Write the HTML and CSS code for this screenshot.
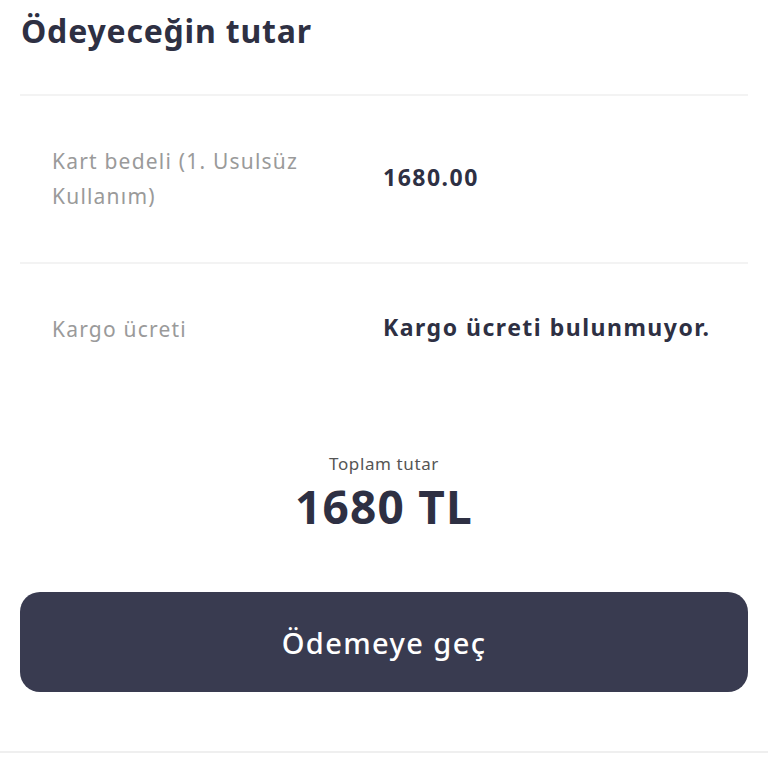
FILE: index.html
```html
<!DOCTYPE html>
<html lang="tr">
<head>
	<meta charset="UTF-8">
	<title>Ödeyeceğin tutar</title>
	<link rel="stylesheet" href="styles.css">
</head>
<body>
	<div class="page">
		<h1 class="title">Ödeyeceğin tutar</h1>
		<div class="row">
			<div class="label">Kart bedeli (1. Usulsüz Kullanım)</div>
			<div class="value">1680.00</div>
		</div>
		<div class="row last">
			<div class="label">Kargo ücreti</div>
			<div class="value">Kargo ücreti bulunmuyor.</div>
		</div>
		<div class="total">
			<div class="total-label">Toplam tutar</div>
			<div class="total-value">1680 TL</div>
		</div>
		<button class="pay">Ödemeye geç</button>
	</div>
	<div class="bottom-line"></div>
</body>
</html>
```

FILE: styles.css
```css
body{
	padding: 0;
	margin: 0;
	background: #fff;
	font-family: "Noto Sans", Lato, sans-serif;
	color: #2e3043;
}
.page{
	padding: 0 20px 0 20px;
}
.title{
	margin: 0;
	padding: 10px 0 0 1px;
	font-size: 32px;
	font-weight: 700;
	letter-spacing: 0.8px;
	line-height: 42px;
	height: 84px;
	border-bottom: 2px solid #f3f3f3;
}
.row{
	display: grid;
	grid-template-columns: 331px 1fr;
	align-items: center;
	padding: 0 0 0 32px;
	height: 166px;
	border-bottom: 2px solid #f3f3f3;
}
.row.last{
	border-bottom: none;
	height: 130px;
}
.label{
	font-size: 21px;
	letter-spacing: 1.2px;
	line-height: 35px;
	color: #9a9a9a;
	width: 270px;
}
.value{
	font-size: 23px;
	font-weight: 700;
	letter-spacing: 1.5px;
	color: #2e3043;
	margin-top: -4px;
}
.total{
	margin-top: 58px;
	text-align: center;
}
.total-label{
	font-size: 17px;
	letter-spacing: 0.6px;
	line-height: 23px;
	color: #555;
}
.total-value{
	font-size: 46px;
	font-weight: 700;
	letter-spacing: 1.2px;
	line-height: 62px;
}
.pay{
	display: block;
	width: 100%;
	height: 100px;
	margin-top: 55px;
	border: none;
	border-radius: 20px;
	background: #393b50;
	color: #fff;
	font-family: "Noto Sans", Lato, sans-serif;
	font-size: 29px;
	font-weight: 500;
	letter-spacing: 1.4px;
}
.bottom-line{
	margin-top: 59px;
	height: 2px;
	background: #efefef;
}
```
